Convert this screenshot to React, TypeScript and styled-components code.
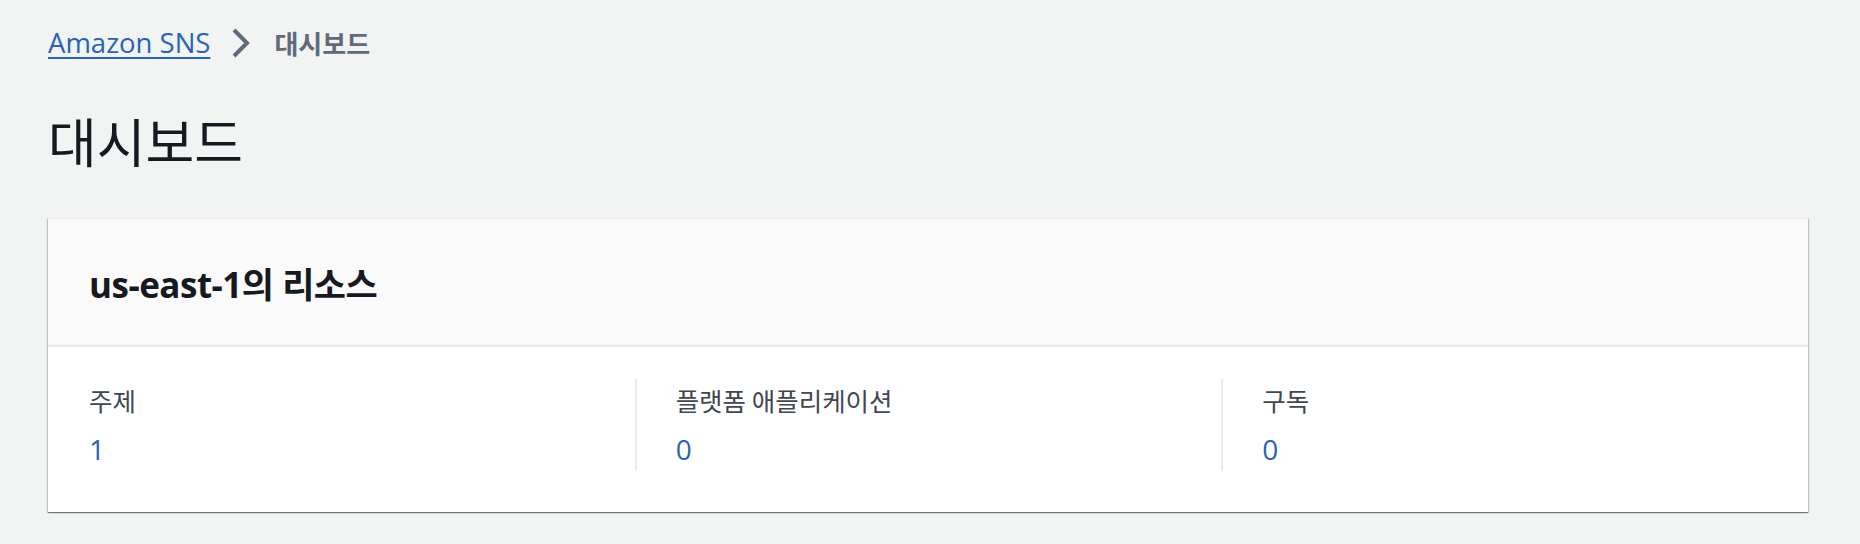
import React from "react";
import styled, { createGlobalStyle } from "styled-components";

const GlobalStyle = createGlobalStyle`
  html, body {
    margin: 0;
    padding: 0;
    background: #f2f3f3;
    font-family: "Open Sans", "Noto Sans CJK KR", sans-serif;
    color: #16191f;
  }
`;

const Page = styled.div`
  padding: 26px 52px 32px 48px;
  display: flex;
  flex-direction: column;
`;

const Breadcrumbs = styled.nav`
  display: flex;
  align-items: center;
  height: 34px;
`;

const CrumbLink = styled.a`
  font-family: "Open Sans", "Noto Sans CJK KR", sans-serif;
  font-size: 27.5px;
  color: #2a63b6;
  text-decoration: underline;
  text-underline-offset: 4px;
  text-decoration-thickness: 2px;
  line-height: 34px;
`;

const Chevron = styled.svg`
  width: 22px;
  height: 32px;
  margin: 0 22px 0 20px;
  flex-shrink: 0;
`;

const CrumbCurrent = styled.span`
  font-family: "Noto Sans CJK KR", sans-serif;
  font-size: 26px;
  font-weight: 700;
  color: #5f6b7a;
  line-height: 34px;
`;

const Title = styled.h1`
  margin: 46px 0 0 0;
  font-family: "Noto Sans CJK KR", sans-serif;
  font-size: 53px;
  font-weight: 400;
  line-height: 68px;
  color: #16191f;
`;

const Card = styled.section`
  margin-top: 44px;
  background: #ffffff;
  border-top: 1px solid #eaeded;
  box-shadow: 0 1px 1px 0 rgba(0, 28, 36, 0.35),
    1px 1px 1px 0 rgba(0, 28, 36, 0.18),
    -1px 1px 1px 0 rgba(0, 28, 36, 0.18);
`;

const CardHeader = styled.header`
  height: 126px;
  background: #fafafa;
  border-bottom: 2px solid #e9ebed;
  display: flex;
  align-items: center;
  padding-left: 41px;
`;

const CardTitle = styled.h2`
  margin: 0;
  font-family: "Open Sans", "Noto Sans CJK KR", sans-serif;
  font-size: 35px;
  font-weight: 700;
  letter-spacing: -0.5px;
  color: #16191f;
`;

const CardBody = styled.div`
  display: grid;
  grid-template-columns: repeat(3, 1fr);
  padding: 32px 0 41px 0;
`;

const Column = styled.div<{ $divider?: boolean }>`
  height: 92px;
  display: flex;
  flex-direction: column;
  padding-left: ${(p) => (p.$divider ? "39px" : "41px")};
  border-left: ${(p) => (p.$divider ? "2px solid #e9ebed" : "none")};
`;

const Label = styled.div`
  font-family: "Noto Sans CJK KR", sans-serif;
  font-size: 25.5px;
  color: #414750;
  line-height: 32px;
  margin-top: 5px;
`;

const Value = styled.a`
  font-family: "Open Sans", sans-serif;
  font-size: 28px;
  color: #2a63b6;
  line-height: 34px;
  margin-top: 16px;
  text-decoration: none;
`;

const stats = [
  { label: "주제", value: "1" },
  { label: "플랫폼 애플리케이션", value: "0" },
  { label: "구독", value: "0" },
];

export default function App() {
  return (
    <>
      <GlobalStyle />
      <Page>
        <Breadcrumbs>
          <CrumbLink href="#">Amazon SNS</CrumbLink>
          <Chevron viewBox="0 0 22 32" fill="none">
            <path
              d="M4 3 L17 16 L4 29"
              stroke="#5f6b7a"
              strokeWidth="4"
              strokeLinecap="butt"
              strokeLinejoin="miter"
            />
          </Chevron>
          <CrumbCurrent>대시보드</CrumbCurrent>
        </Breadcrumbs>
        <Title>대시보드</Title>
        <Card>
          <CardHeader>
            <CardTitle>us-east-1의 리소스</CardTitle>
          </CardHeader>
          <CardBody>
            {stats.map((s, i) => (
              <Column key={s.label} $divider={i > 0}>
                <Label>{s.label}</Label>
                <Value href="#">{s.value}</Value>
              </Column>
            ))}
          </CardBody>
        </Card>
      </Page>
    </>
  );
}
